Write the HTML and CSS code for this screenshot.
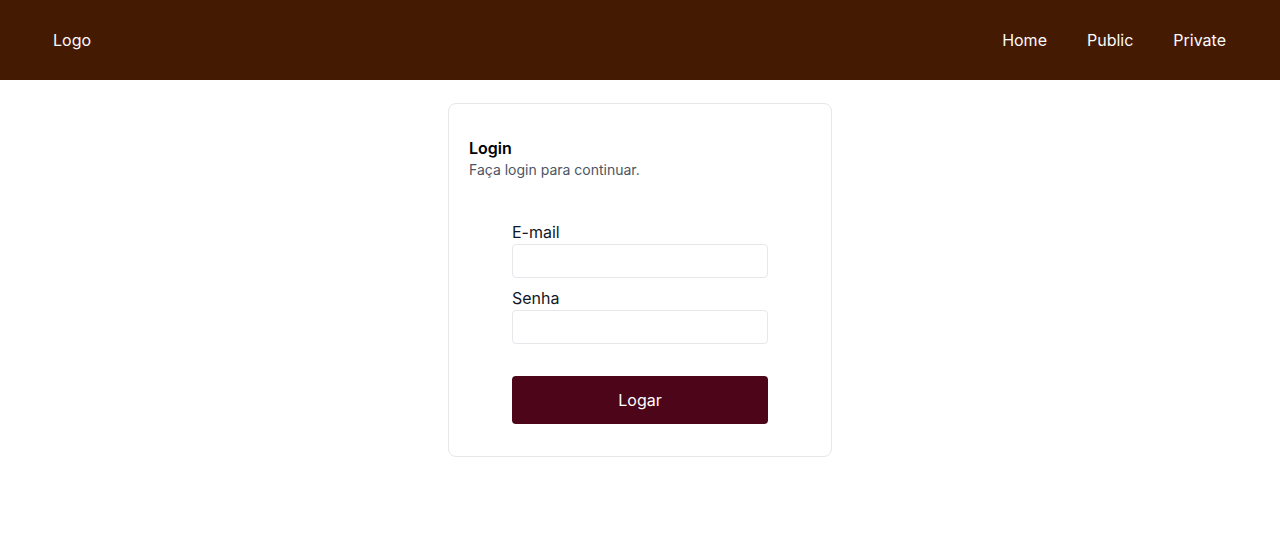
FILE: index.html
```html
<!DOCTYPE html>
<html lang="pt">
<head>
<meta charset="utf-8">
<title>Login</title>
<link rel="stylesheet" href="styles.css">
</head>
<body>
<header class="topbar">
  <a class="brand" href="#">Logo</a>
  <nav class="nav">
    <a href="#">Home</a>
    <a href="#">Public</a>
    <a href="#">Private</a>
  </nav>
</header>
<main class="main">
  <section class="card">
    <div class="card-head">
      <h1 class="card-title">Login</h1>
      <p class="card-desc">Faça login para continuar.</p>
    </div>
    <form class="form">
      <label class="field-label" for="email">E-mail</label>
      <input class="field-input" id="email" type="email">
      <label class="field-label second" for="senha">Senha</label>
      <input class="field-input" id="senha" type="password">
      <button class="submit" type="button">Logar</button>
    </form>
  </section>
</main>
</body>
</html>
```
FILE: styles.css
```css
* { box-sizing: border-box; }
html, body { margin: 0; padding: 0; }
body {
  font-family: Inter, "Noto Sans", sans-serif;
  font-size: 16px;
  line-height: 24px;
  color: #111827;
  background: #fff;
}
.topbar {
  height: 80px;
  background: #451a03;
  display: flex;
  align-items: center;
  justify-content: space-between;
  padding: 0 54px 0 53px;
}
.topbar a {
  color: #fafafa;
  text-decoration: none;
  font-size: 16px;
  font-weight: 400;
}
.nav { display: flex; gap: 40px; }
.main {
  display: flex;
  justify-content: center;
  padding-top: 23px;
}
.card {
  width: 384px;
  border: 1px solid #e5e7eb;
  border-radius: 8px;
  padding: 32px 20px 32px;
  background: #fff;
}
.card-title {
  margin: 0;
  font-size: 16px;
  line-height: 24px;
  font-weight: 600;
  color: #000;
}
.card-desc {
  margin: 0;
  font-size: 14px;
  line-height: 20px;
  color: #4b5563;
}
.form {
  width: 256px;
  margin: 40px auto 0;
  display: flex;
  flex-direction: column;
}
.field-label {
  font-size: 16px;
  line-height: 24px;
  color: #111827;
}
.field-label.second { margin-top: 8px; }
.field-input {
  height: 34px;
  border: 1px solid #e5e7eb;
  border-radius: 4px;
  font: inherit;
  padding: 0 8px;
  outline: none;
}
.submit {
  margin-top: 32px;
  height: 48px;
  border: 0;
  border-radius: 4px;
  background: #4c0519;
  color: #fff;
  font-family: inherit;
  font-size: 16px;
  font-weight: 400;
  cursor: pointer;
}
```
